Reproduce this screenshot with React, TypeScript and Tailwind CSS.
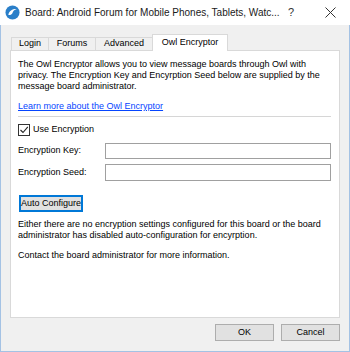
import { useState } from 'react';

const tabs = ['Login', 'Forums', 'Advanced', 'Owl Encryptor'];
const tabWidths: Record<string, string> = {
  Login: 'w-[38px]',
  Forums: 'w-[48px]',
  Advanced: 'w-[58px]',
  'Owl Encryptor': 'w-[76px]',
};

function AppIcon() {
  return (
    <svg width="15" height="15" viewBox="0 0 16 16">
      <circle cx="8" cy="8" r="7.5" fill="#2a7fc9" />
      <path d="M3.5 10.5 C4.5 6 8 4 12.5 4.2 C10 5 8.5 6.5 8 8.5 C7 10.5 5 11.2 3.5 10.5 Z" fill="#ffffff" />
    </svg>
  );
}

export default function App() {
  const [active, setActive] = useState('Owl Encryptor');
  const [useEnc, setUseEnc] = useState(true);

  return (
    <div className="w-[350px] h-[352px] flex flex-col bg-white text-black font-['Liberation_Sans',Arial,sans-serif] text-[9px] overflow-hidden">
      {/* Title bar */}
      <div className="h-[25px] flex items-center bg-white shrink-0">
        <div className="ml-[5px] flex items-center">
          <AppIcon />
        </div>
        <span className="ml-[5px] text-[10px] text-[#1a1a1a] whitespace-nowrap">
          Board: Android Forum for Mobile Phones, Tablets, Watc...
        </span>
        <span className="ml-auto mr-[31px] text-[11px] text-[#333]">?</span>
        <svg width="11" height="11" viewBox="0 0 11 11" className="mr-[14px]">
          <path d="M0.5 0.5 L10.5 10.5 M10.5 0.5 L0.5 10.5" stroke="#333" strokeWidth="1" />
        </svg>
      </div>

      {/* Body */}
      <div className="flex-1 flex flex-col bg-[#f0f0f0] border-x border-b border-[#a4c2e4] px-[9px] pt-[9px] pb-[9px]">
        {/* Tabs */}
        <div className="flex items-end pl-px -mb-px relative z-10 h-[17px]">
          {tabs.map((t) => {
            const isActive = t === active;
            return (
              <button
                key={t}
                onClick={() => setActive(t)}
                className={
                  isActive
                    ? `${tabWidths[t]} h-[17px] -ml-px bg-white border border-b-0 border-[#d9d9d9] flex items-center justify-center text-[9px]`
                    : `${tabWidths[t]} h-[14px] -ml-px first:ml-0 bg-[#f0f0f0] border border-[#d9d9d9] flex items-center justify-center text-[9px]`
                }
              >
                {t}
              </button>
            );
          })}
        </div>

        {/* Pane */}
        <div className="h-[268px] bg-white border border-[#d9d9d9] pl-[7px] pr-[8px] pt-[8px] flex flex-col">
          <p className="leading-[11px]">
            The Owl Encryptor allows you to view message boards through Owl with privacy. The
            Encryption Key and Encyrption Seed below are supplied by the message board
            administrator.
          </p>
          <a href="#" className="mt-[9px] leading-[11px] text-[#0645ff] underline self-start">
            Learn more about the Owl Encryptor
          </a>
          <div className="mt-[4px] h-px bg-[#d6d6d6]" />

          <label className="mt-[7px] flex items-center gap-[3px] h-[12px]">
            <span
              onClick={() => setUseEnc(!useEnc)}
              className="w-[12px] h-[12px] border border-[#333] bg-white flex items-center justify-center"
            >
              {useEnc && (
                <svg width="10" height="10" viewBox="0 0 10 10">
                  <path d="M1.5 5 L4 7.5 L8.8 1.8" stroke="#222" strokeWidth="1.1" fill="none" />
                </svg>
              )}
            </span>
            <span>Use Encryption</span>
          </label>

          <div className="mt-[7px] flex items-center">
            <span className="w-[87px]">Encryption Key:</span>
            <input className="flex-1 h-[16px] border border-[#a0a0a0] bg-white outline-none px-1 text-[9px]" />
          </div>
          <div className="mt-[5px] flex items-center">
            <span className="w-[87px]">Encryption Seed:</span>
            <input className="flex-1 h-[17px] border border-[#a0a0a0] bg-white outline-none px-1 text-[9px]" />
          </div>

          <button className="mt-[14px] ml-px self-start w-[64px] h-[17px] bg-[#e1e1e1] border border-[#0078d7] shadow-[inset_0_0_0_1px_#0078d7] text-[9px]">
            Auto Configure
          </button>

          <p className="mt-[7px] leading-[10.5px]">
            Either there are no encryption settings configured for this board or the board
            administrator has disabled auto-configuration for encyrption.
          </p>
          <p className="mt-[10px] leading-[10.5px]">Contact the board administrator for more information.</p>
        </div>

        {/* Footer buttons */}
        <div className="mt-[6px] flex justify-end gap-[7px]">
          <button className="w-[59px] h-[17px] bg-[#e1e1e1] border border-[#adadad] text-[9px]">OK</button>
          <button className="w-[59px] h-[17px] bg-[#e1e1e1] border border-[#adadad] text-[9px]">Cancel</button>
        </div>
      </div>
    </div>
  );
}
